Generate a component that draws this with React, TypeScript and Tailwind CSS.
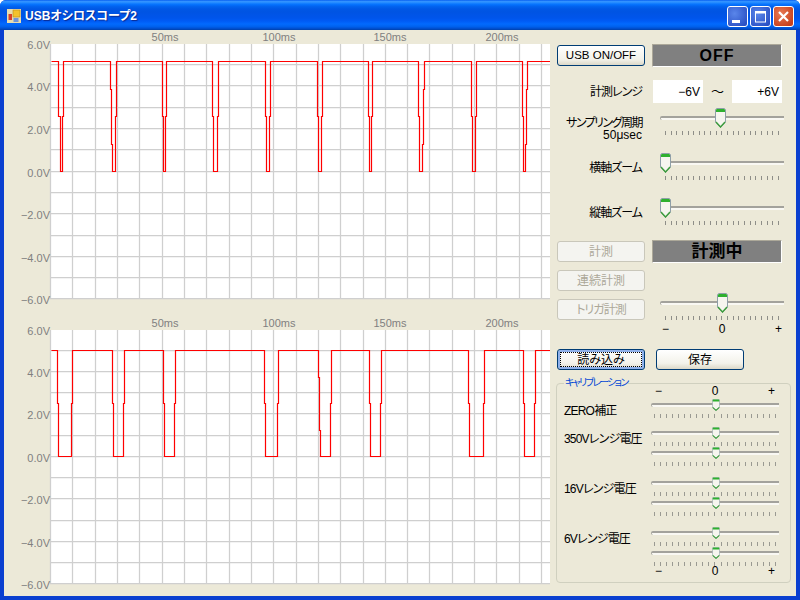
import React from "react";

const vLines = [72, 95, 117, 139, 162, 184, 206, 229, 251, 273, 296, 318, 340, 363, 385, 407, 429, 452, 474, 496, 519, 541];
const topH = [43, 64, 85, 107, 128, 149, 171, 192, 213, 235, 256, 277, 298];
const botH = [329, 350, 371, 392, 413, 435, 456, 477, 498, 520, 541, 562, 583];

const toPts = (p: number[][]) => p.map(([x, y]) => `${x + 0.5},${y + 0.5}`).join(" ");

const topTrace = toPts([
  [51, 61], [58, 61], [58, 116], [60, 116], [60, 171], [62, 171], [62, 116], [63, 116], [63, 61],
  [110, 61], [110, 89], [111, 89], [111, 144], [112, 144], [112, 171], [115, 171], [115, 116], [116, 116], [116, 61],
  [162, 61], [162, 116], [163, 116], [163, 171], [165, 171], [165, 116], [166, 116], [166, 61],
  [212, 61], [212, 116], [213, 116], [213, 171], [217, 171], [217, 116], [218, 116], [218, 61],
  [265, 61], [265, 116], [266, 116], [266, 171], [269, 171], [269, 116], [270, 116], [270, 61],
  [317, 61], [317, 116], [318, 116], [318, 171], [321, 171], [321, 116], [322, 116], [322, 61],
  [368, 61], [368, 116], [369, 116], [369, 171], [371, 171], [371, 116], [372, 116], [372, 61],
  [418, 61], [418, 116], [419, 116], [419, 171], [422, 171], [422, 144], [423, 144], [423, 89], [424, 89], [424, 61],
  [471, 61], [471, 116], [472, 116], [472, 171], [475, 171], [475, 116], [476, 116], [476, 61],
  [522, 61], [522, 116], [523, 116], [523, 171], [525, 171], [525, 144], [526, 144], [526, 89], [527, 89], [527, 61],
  [550, 61],
]);

const botTrace = toPts([
  [51, 350], [57, 350], [57, 403], [58, 403], [58, 456], [71, 456], [71, 403], [72, 403], [72, 350],
  [112, 350], [112, 403], [113, 403], [113, 456], [123, 456], [123, 403], [124, 403], [124, 350],
  [163, 350], [163, 403], [164, 403], [164, 456], [174, 456], [174, 403], [175, 403], [175, 350],
  [264, 350], [264, 403], [265, 403], [265, 456], [277, 456], [277, 403], [278, 403], [278, 350],
  [318, 350], [318, 377], [319, 377], [319, 430], [320, 430], [320, 456], [330, 456], [330, 403], [331, 403], [331, 350],
  [369, 350], [369, 403], [370, 403], [370, 456], [380, 456], [380, 403], [381, 403], [381, 350],
  [468, 350], [468, 403], [469, 403], [469, 456], [483, 456], [483, 403], [484, 403], [484, 350],
  [523, 350], [523, 403], [524, 403], [524, 456], [534, 456], [534, 403], [535, 403], [535, 350],
  [550, 350],
]);

const Chart = ({ y0, h, lines, points }: { y0: number; h: number; lines: number[]; points: string }) => {
  const top = lines[0];
  const bottom = lines[12];
  const labels = ["6.0V", "4.0V", "2.0V", "0.0V", "−2.0V", "−4.0V", "−6.0V"];
  return (
    <svg width={546} height={h} viewBox={`4 ${y0} 546 ${h}`} className="block shrink-0">
      <rect x={51} y={top + 1} width={499} height={bottom - top - 1} fill="#fff" />
      {vLines.map((x) => (
        <line key={x} x1={x + 0.5} x2={x + 0.5} y1={top + 1} y2={bottom} stroke="#cfcfcf" strokeWidth={1.25} />
      ))}
      <line x1={50.5} x2={50.5} y1={top + 1} y2={bottom + 1} stroke="#cfcfcf" strokeWidth={1.25} />
      {lines.slice(1).map((y) => (
        <line key={y} x1={50} x2={550} y1={y + 0.5} y2={y + 0.5} stroke="#cfcfcf" strokeWidth={1.25} />
      ))}
      <polyline points={points} fill="none" stroke="#ff0000" strokeWidth={1.2} />
      {labels.map((t, i) => (
        <text key={t} x={50} y={lines[i * 2] + 6} textAnchor="end" fontSize={11} fill="#808080">
          {t}
        </text>
      ))}
      {[
        ["50ms", 165],
        ["100ms", 279],
        ["150ms", 390],
        ["200ms", 502],
      ].map(([t, x]) => (
        <text key={t} x={x} y={top - 2} textAnchor="middle" fontSize={11} fill="#808080">
          {t}
        </text>
      ))}
    </svg>
  );
};

const Thumb = ({ w, h }: { w: number; h: number }) => (
  <svg width={w} height={h} viewBox="0 0 11 20" preserveAspectRatio="none" className="block">
    <path d="M1.5.5h8l1 1v12.5l-5 5.5-5-5.5V1.5z" fill="#f6f5ef" stroke="#8f9fa8" />
    <path d="M1.5 1h8l.5 .5V4H1V1.5z" fill="#2fb02f" />
    <path d="M1 14l4.500 5 4.500-5" fill="none" stroke="#3d9e3d" strokeWidth="1.400" />
  </svg>
);

const Ticks = ({ small }: { small?: boolean }) => (
  <div className={small ? "flex justify-between px-[3px] mt-[3px]" : "flex justify-between px-[5px] mt-[3px]"}>
    {Array.from({ length: 21 }).map((_, i) => (
      <span key={i} className={small ? "w-px h-[4px] bg-[#9a9a92]" : "w-px h-[4px] bg-[#8e8e88]"} />
    ))}
  </div>
);

// big trackbar, 124 wide
const Track = ({ value }: { value: number }) => (
  <div className="relative w-[124px] h-[27px]">
    <div className="absolute left-0 right-0 top-[8px] h-[4px] border-t-2 border-l border-[#a3a29c] bg-[#f9f8f3] rounded-l-[2px]" />
    <div className="absolute top-0" style={{ left: value }}>
      <Thumb w={11} h={20} />
    </div>
    <div className="pt-[20px]">
      <Ticks />
    </div>
  </div>
);

// small trackbar inside the calibration group
const SmallTrack = () => (
  <div className="relative w-[128px] h-[19px]">
    <div className="absolute left-0 right-0 top-[4px] h-[4px] border-t-2 border-l border-[#a3a29c] bg-[#f9f8f3] rounded-l-[2px]" />
    <div className="absolute top-0 left-[61px]">
      <Thumb w={8} h={12} />
    </div>
    <div className="pt-[12px]">
      <Ticks small />
    </div>
  </div>
);

const Btn = ({ children, disabled, focus }: { children: React.ReactNode; disabled?: boolean; focus?: boolean }) => (
  <div
    className={
      disabled
        ? "flex items-center justify-center h-[21px] w-[88px] rounded-[3px] border border-[#c9c7ba] bg-[#f4f4f0] text-[#aca899] text-[12px] whitespace-nowrap"
        : focus
          ? "flex items-center justify-center h-[21px] w-[88px] rounded-[3px] border border-[#003c74] bg-[linear-gradient(180deg,#fff_0%,#f3f2ea_70%,#dcd8c8_100%)] shadow-[inset_0_0_0_2px_#8fb0ea] [outline:1px_dotted_#000] [outline-offset:-4px] text-black text-[12px] whitespace-nowrap"
          : "flex items-center justify-center h-[21px] w-[88px] rounded-[3px] border border-[#003c74] bg-[linear-gradient(180deg,#fff_0%,#f3f2ea_70%,#dcd8c8_100%)] text-black text-[12px] whitespace-nowrap"
    }
  >
    {children}
  </div>
);

const Panel = ({ children }: { children: React.ReactNode }) => (
  <div className="flex items-center justify-center ml-[7px] w-[130px] h-[23px] bg-[#808080] border border-t-[#aca899] border-l-[#aca899] border-r-white border-b-white text-black font-bold">
    {children}
  </div>
);

const SliderRow = ({ label, sub, value }: { label: string; sub?: string; value: number }) => (
  <div className="flex items-start h-[27px]">
    <div className="w-[85px] pt-[9px] text-right text-[12px] leading-[12px] text-black whitespace-nowrap">
      <div className={sub ? "tracking-[-1.500px]" : "tracking-[-1px]"}>{label}</div>
      {sub && <div>{sub}</div>}
    </div>
    <div className="ml-[18px]">
      <Track value={value} />
    </div>
  </div>
);

const CalRow = ({ label, n }: { label: string; n: number }) => (
  <div className="flex items-start">
    <div className="w-[87px] mt-[5px] text-[12px] leading-[14px] tracking-[-0.8px] text-black whitespace-nowrap">{label}</div>
    <div className="flex flex-col gap-px">
      {Array.from({ length: n }).map((_, i) => (
        <SmallTrack key={i} />
      ))}
    </div>
  </div>
);

const PlusMinus = ({ cls }: { cls: string }) => (
  <div className={cls}>
    <span>−</span>
    <span>0</span>
    <span>+</span>
  </div>
);

const WinBtn = ({ children, close }: { children: React.ReactNode; close?: boolean }) => (
  <div
    className={
      close
        ? "w-[21px] h-[21px] rounded-[3px] border border-white bg-[radial-gradient(circle_at_35%_35%,#e87a55,#c8401c_80%)]"
        : "w-[21px] h-[21px] rounded-[3px] border border-white bg-[radial-gradient(circle_at_35%_35%,#5a86ea,#2a50c4_85%)]"
    }
  >
    <svg width={19} height={19} viewBox="0 0 19 19" className="block">
      {children}
    </svg>
  </div>
);

export default function App() {
  return (
    <div className="w-[800px] h-[600px] bg-[#0a3fd0] rounded-t-[6px] overflow-hidden flex flex-col font-['Liberation_Sans','Noto_Sans_CJK_JP',sans-serif] [font-feature-settings:'palt'] select-none">
      {/* title bar */}
      <div className="h-[30px] shrink-0 flex items-center pl-[7px] pr-[6px] bg-[linear-gradient(180deg,#0058ee_0%,#3593ff_4%,#288eff_8%,#127dff_12%,#036ffc_16%,#0262ee_22%,#0057e5_30%,#0054e3_40%,#0055eb_60%,#005bf5_70%,#026afe_80%,#0062ef_88%,#0052d6_94%,#0040ab_100%)]">
        <svg width={14} height={14} viewBox="0 0 14 14" className="block shrink-0 mt-[2px]">
          <rect width={14} height={14} fill="#e8dcae" />
          <rect x={6} y={1} width={7} height={7} fill="#f3c22d" stroke="#b88a1a" strokeWidth={0.6} />
          <rect x={1.500} y={5} width={3.500} height={6} fill="#d8402a" />
          <rect x={6.500} y={9} width={5} height={4} fill="#6f94d8" />
        </svg>
        <div className="ml-[4px] mt-px text-white font-bold text-[12px] leading-none whitespace-nowrap [text-shadow:1px_1px_1px_#0a2a90]">USBオシロスコープ2</div>
        <div className="ml-auto mt-[3px] flex gap-[2px]">
          <WinBtn>
            <rect x={4} y={13} width={8} height={3} fill="#fff" />
          </WinBtn>
          <WinBtn>
            <rect x={4.500} y={5} width={10} height={10} fill="none" stroke="#fff" />
            <rect x={4} y={4} width={11} height={2.500} fill="#fff" />
          </WinBtn>
          <WinBtn close>
            <path d="M5 5l9 9M14 5l-9 9" stroke="#fff" strokeWidth={2.200} />
          </WinBtn>
        </div>
      </div>

      {/* client area */}
      <div className="flex-1 mx-[4px] mb-[4px] bg-[#ece9d8] flex min-h-0">
        <div className="flex flex-col w-[546px] shrink-0">
          <Chart y0={30} h={283} lines={topH} points={topTrace} />
          <Chart y0={313} h={283} lines={botH} points={botTrace} />
        </div>

        <div className="flex-1 pl-[7px] pt-[14px] flex flex-col">
          <div className="flex items-center">
            <Btn>
              <span className="text-[11.5px]">USB ON/OFF</span>
            </Btn>
            <Panel>
              <span className="text-[16px] tracking-[1px]">OFF</span>
            </Panel>
          </div>

          <div className="flex items-center mt-[13px] h-[23px]">
            <div className="w-[85px] text-right text-[12px] tracking-[-1px] text-black">計測レンジ</div>
            <div className="ml-[11px] w-[50px] h-[23px] bg-white flex items-center justify-end pr-[3px] text-[12px] text-black">−6V</div>
            <div className="w-[29px] text-center text-[13px] text-black">～</div>
            <div className="w-[50px] h-[23px] bg-white flex items-center justify-end pr-[3px] text-[12px] text-black">+6V</div>
          </div>

          <div className="mt-[5px]">
            <SliderRow label="サンプリング周期" sub="50μsec" value={55} />
          </div>
          <div className="mt-[18px]">
            <SliderRow label="横軸ズーム" value={0} />
          </div>
          <div className="mt-[18px]">
            <SliderRow label="縦軸ズーム" value={0} />
          </div>

          <div className="flex items-center mt-[15px]">
            <Btn disabled>計測</Btn>
            <Panel>
              <span className="text-[17px]">計測中</span>
            </Panel>
          </div>

          <div className="flex items-start mt-[7px]">
            <div className="flex flex-col gap-[8px]">
              <Btn disabled>連続計測</Btn>
              <Btn disabled>
                <span className="tracking-[-1px]">トリガ計測</span>
              </Btn>
            </div>
            <div className="ml-[15px] mt-[23px] w-[124px]">
              <Track value={57} />
              <PlusMinus cls="flex justify-between px-[2px] mt-[3px] text-[12px] leading-[12px] text-black" />
            </div>
          </div>

          <div className="flex items-center gap-[11px] mt-[14px]">
            <Btn focus>読み込み</Btn>
            <Btn>保存</Btn>
          </div>

          {/* calibration */}
          <div className="relative mt-[13px] -ml-px w-[235px] h-[200px] border border-[#d0d0bf] rounded-[4px] pl-[7px]">
            <div className="absolute -top-[8px] left-[7px] px-px bg-[#ece9d8] text-[10px] leading-[14px] tracking-[-1.800px] text-[#0046d5] whitespace-nowrap">キャリブレーション</div>
            <PlusMinus cls="flex justify-between w-[120px] ml-[91px] mt-px text-[12px] leading-[12px] h-[12px] text-black" />
            <div className="mt-[2px]">
              <CalRow label="ZERO補正" n={1} />
            </div>
            <div className="mt-[9px]">
              <CalRow label="350Vレンジ電圧" n={2} />
            </div>
            <div className="mt-[11px]">
              <CalRow label="16Vレンジ電圧" n={2} />
            </div>
            <div className="mt-[11px]">
              <CalRow label="6Vレンジ電圧" n={2} />
            </div>
            <PlusMinus cls="flex justify-between w-[120px] ml-[91px] text-[12px] leading-[10px] h-[10px] text-black" />
          </div>
        </div>
      </div>
    </div>
  );
}
